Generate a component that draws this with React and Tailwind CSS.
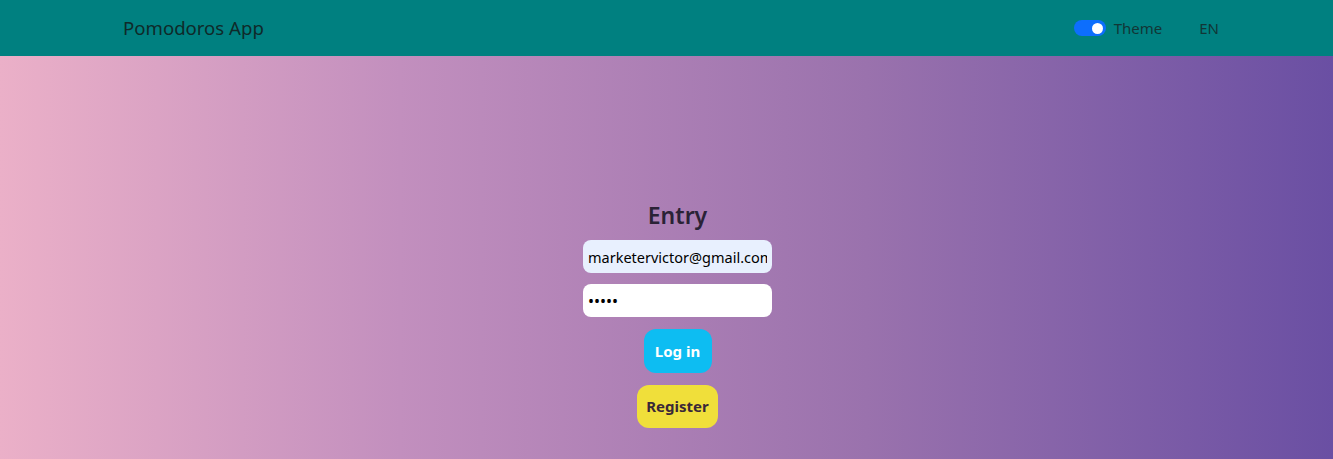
export default function App() {
  return (
    <div className="h-[459px] flex flex-col font-['Noto_Sans',sans-serif]">
      {/* header */}
      <header className="h-14 shrink-0 bg-[#008080] flex items-center pl-[123px] pr-[114px]">
        <span className="text-[18.6px] text-[#0f2a2a] leading-none">Pomodoros App</span>
        <div className="ml-auto flex items-center">
          <div className="w-8 h-4 rounded-full bg-[#0d6efd] flex items-center justify-end pr-[3px]">
            <div className="w-[11px] h-[11px] rounded-full bg-white" />
          </div>
          <span className="ml-[8px] text-[15px] text-[#123636]">Theme</span>
          <span className="ml-[37px] text-[15px] text-[#123636]">EN</span>
        </div>
      </header>

      {/* body */}
      <main className="flex-1 bg-[linear-gradient(to_right,#ebb0c8,#c28fbe_30%,#9a72ad_65%,#6a4fa3)] flex flex-col items-center pt-[144px] pl-[22px]">
        <h1 className="text-[23px] font-semibold text-[#2a2236] leading-[30px]">Entry</h1>
        <input
          className="mt-[10px] w-[189px] h-[33px] rounded-lg bg-[#e8f0fe] px-[5px] text-[14.5px] text-black outline-none"
          defaultValue="marketervictor@gmail.com"
        />
        <input
          type="password"
          className="mt-[11px] w-[189px] h-[33px] rounded-lg bg-white px-[5px] text-[16px] text-black outline-none"
          defaultValue="12345"
        />
        <button className="mt-[12px] w-[68px] h-[44px] rounded-xl bg-[#0dbdf2] text-white text-[15px] font-bold">
          Log in
        </button>
        <button className="mt-[12px] w-[81px] h-[43px] rounded-xl bg-[#f0df3a] text-[#3a2838] text-[15px] font-bold">
          Register
        </button>
      </main>
    </div>
  )
}
